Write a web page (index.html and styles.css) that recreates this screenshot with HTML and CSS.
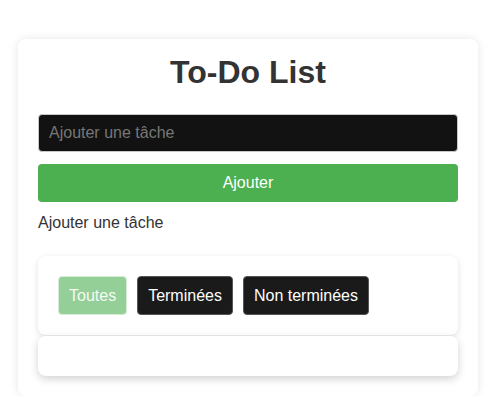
FILE: index.html
```html
<!DOCTYPE html>
<html lang="fr">
<head>
<meta charset="utf-8">
<title>To-Do List</title>
<link rel="stylesheet" href="styles.css">
</head>
<body>
<div class="app">
  <h1 class="title">To-Do List</h1>
  <input class="task-input" type="text" placeholder="Ajouter une tâche">
  <button class="add-btn">Ajouter</button>
  <div class="hint">Ajouter une tâche</div>
  <div class="filters">
    <button class="filter active">Toutes</button>
    <button class="filter">Terminées</button>
    <button class="filter">Non terminées</button>
  </div>
  <ul class="task-list"></ul>
</div>
</body>
</html>
```
FILE: styles.css
```css
html, body {
  margin: 0;
  padding: 0;
  background: #fff;
}
body {
  font-family: "Liberation Sans", Arial, sans-serif;
  color: #333;
  padding-top: 39px;
}
.app {
  box-sizing: border-box;
  width: 460px;
  margin: 0 0 0 18px;
  padding: 15px 20px 20px;
  background: #fff;
  border-radius: 8px;
  box-shadow: 0 0 10px rgba(0, 0, 0, 0.1);
  display: flex;
  flex-direction: column;
}
.title {
  margin: 0 0 23px;
  font-size: 32px;
  font-weight: bold;
  text-align: center;
  color: #333;
  line-height: 37px;
}
.task-input {
  box-sizing: border-box;
  height: 38px;
  width: 100%;
  margin: 0;
  padding: 0 10px;
  font-family: inherit;
  font-size: 16px;
  color: #fff;
  background: #121212;
  border: 1px solid #c8c8c8;
  border-radius: 4px;
}
.task-input::placeholder {
  color: #777;
}
.add-btn {
  box-sizing: border-box;
  height: 38px;
  width: 100%;
  margin: 12px 0 0;
  font-family: inherit;
  font-size: 16px;
  color: #fff;
  background: #4caf50;
  border: none;
  border-radius: 4px;
}
.hint {
  margin: 12px 0 24px;
  font-size: 16px;
  line-height: 18px;
  color: #333;
}
.filters {
  display: flex;
  gap: 10px;
  padding: 20px;
  background: #fff;
  border-radius: 8px;
  box-shadow: 0 2px 6px rgba(0, 0, 0, 0.12);
}
.filter {
  box-sizing: border-box;
  height: 39px;
  padding: 0 10px;
  font-family: inherit;
  font-size: 16px;
  color: #fff;
  background: #1a1a1a;
  border: 1px solid #555;
  border-radius: 4px;
}
.filter.active {
  background: #94cf98;
  border-color: #d7ecd8;
  color: #f4faf4;
}
.task-list {
  margin: 1px 0 0;
  padding: 20px;
  list-style: none;
  background: #fff;
  border-radius: 8px;
  box-shadow: 0 3px 8px rgba(0, 0, 0, 0.18);
}
```
